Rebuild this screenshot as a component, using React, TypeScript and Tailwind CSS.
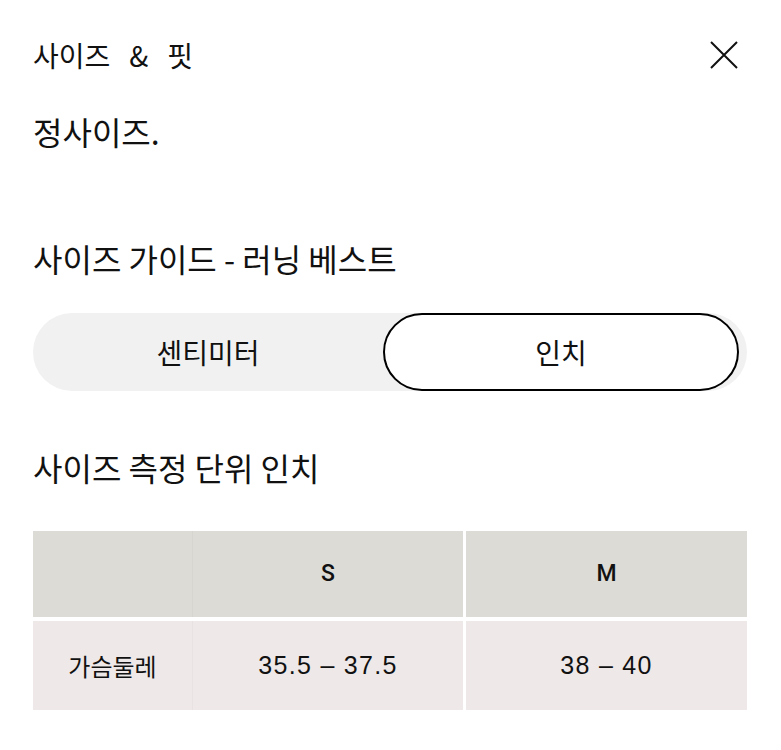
const kr = "font-['Noto_Sans_CJK_KR',sans-serif]"
const num = "font-['Liberation_Sans','Noto_Sans_CJK_KR',sans-serif]"
const head = "font-['Roboto','Liberation_Sans',sans-serif]"

const CloseIcon = () => (
  <svg width="30" height="30" viewBox="0 0 30 30" className="mr-[9px]">
    <path d="M2 2 L28 28 M28 2 L2 28" stroke="#111" strokeWidth="2" fill="none" />
  </svg>
)

const SizeTable = () => {
  return (
    <div className="mt-[46px] flex w-[714px] flex-col gap-[4px]">
      <div className="flex h-[86px] bg-[#dcdbd6]">
        <div className="w-[159px]" />
        <div
          className={`flex w-[271px] items-center justify-center border-l border-[#d6d5d0] text-[23px] font-medium text-[#111] ${head}`}
        >
          S
        </div>
        <div className="w-[3px] bg-white" />
        <div className={`flex flex-1 items-center justify-center text-[23px] font-medium text-[#111] ${head}`}>
          M
        </div>
      </div>
      <div className="flex h-[89px] bg-[#eee8e8]">
        <div className={`flex w-[159px] items-center justify-center text-[24px] text-[#111] ${kr}`}>가슴둘레</div>
        <div
          className={`flex w-[271px] items-center justify-center border-l border-[#e8e2e2] text-[25px] tracking-[1.3px] text-[#111] ${num}`}
        >
          35.5 – 37.5
        </div>
        <div className="w-[3px] bg-white" />
        <div className={`flex flex-1 items-center justify-center text-[25px] tracking-[1.3px] text-[#111] ${num}`}>
          38 – 40
        </div>
      </div>
    </div>
  )
}

export default function App() {
  return (
    <div className={`min-h-[750px] w-[781px] bg-white px-[33px] pt-[40px] text-[#111] ${kr}`}>
      <div className="flex h-[30px] items-center justify-between">
        <div className="flex items-center gap-[19px] text-[28px] leading-[30px]">
          <span>사이즈</span>
          <span>&amp;</span>
          <span>핏</span>
        </div>
        <CloseIcon />
      </div>

      <h1 className="mt-[43px] text-[32px] leading-[36px]">정사이즈.</h1>

      <h2 className="mt-[91px] text-[32px] leading-[36px]">사이즈 가이드 - 러닝 베스트</h2>

      {/* unit toggle */}
      <div className="mt-[37px] flex h-[78px] w-[714px] items-center rounded-full bg-[#f1f1f1] pr-[8px]">
        <div className="flex flex-1 items-center justify-center text-[28px]">센티미터</div>
        <div className="flex h-full w-[356px] items-center justify-center rounded-full border-2 border-black bg-white text-[28px]">
          인치
        </div>
      </div>

      <h2 className="mt-[58px] text-[32px] leading-[36px]">사이즈 측정 단위 인치</h2>

      <SizeTable />
    </div>
  )
}
